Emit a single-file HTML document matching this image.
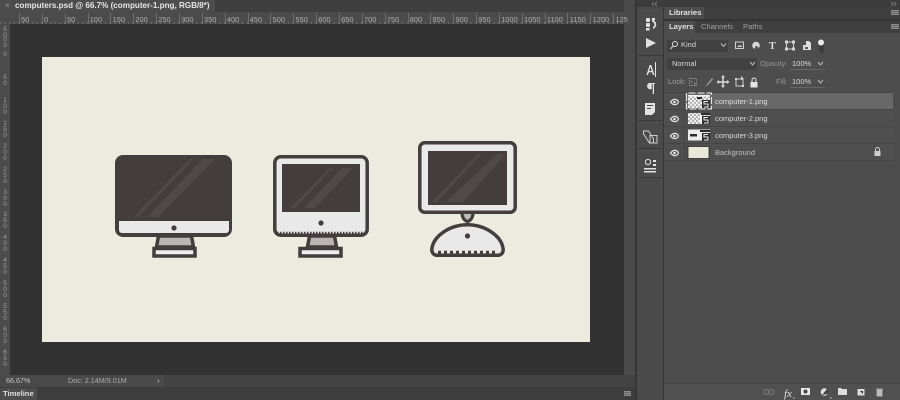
<!DOCTYPE html>
<html><head><meta charset="utf-8"><style>
html,body{margin:0;padding:0;background:#404040}
#r{position:relative;width:900px;height:400px;overflow:hidden;background:#404040;font-family:"Liberation Sans",sans-serif;color:#d2d2d2;font-size:7.5px;filter:blur(.35px)}
#r div{position:absolute}
.t{white-space:nowrap;line-height:12px}
svg{position:absolute;left:0;top:0}
.row{left:664px;width:229px;height:16px;background:#4f4f4f}
.v{font-size:6.5px;line-height:6px;color:#a0a0a0;width:10px;left:0;text-align:center}
</style></head><body><div id="r">
<div style="left:0;top:0;width:636px;height:12px;background:#3e3e3e"></div>
<div style="left:0;top:0;width:215px;height:12px;background:#4d4d4d"></div>
<div class="t" style="left:5px;top:0;color:#9a9a9a;font-size:8px">×</div>
<div class="t" style="left:15px;top:0;color:#e6e6e6;font-weight:bold;font-size:8.1px">computers.psd @ 66.7% (computer-1.png, RGB/8*)</div>
<div style="left:0;top:12px;width:624px;height:12px;background:#4b4b4b"></div>
<div style="left:0;top:22px;width:624px;height:2px;background:repeating-linear-gradient(90deg,#6e6e6e 0 1px,transparent 1px 4.57px)"></div>
<div style="left:0;top:24px;width:10px;height:351px;background:#4b4b4b"></div>
<div style="left:10px;top:24px;width:614px;height:351px;background:#323232"></div>
<div style="left:624px;top:0;width:11px;height:375px;background:#4a4a4a"></div>
<div style="left:42px;top:57px;width:548px;height:285px;background:#ebebdf"></div>
<div style="left:0;top:375px;width:164px;height:12px;background:#4a4a4a"></div>
<div style="left:164px;top:375px;width:471px;height:12px;background:#434343"></div>
<div class="t" style="left:6px;top:375px;color:#c4c4c4;font-size:7.2px">66.67%</div>
<div class="t" style="left:68px;top:375px;color:#aaa;font-size:7.2px">Doc: 2.14M/9.01M</div>
<div class="t" style="left:157px;top:375px;color:#c8c8c8;font-size:8px">›</div>
<div style="left:0;top:387px;width:635px;height:13px;background:#3d3d3d"></div>
<div style="left:0;top:388px;width:37px;height:12px;background:#4d4d4d"></div>
<div class="t" style="left:3px;top:388px;color:#e0e0e0;font-weight:bold;font-size:7.6px">Timeline</div>
<div style="left:635px;top:0;width:2px;height:400px;background:#363636"></div>
<div style="left:637px;top:0;width:26px;height:400px;background:#4a4a4a"></div>
<div style="left:663px;top:0;width:1px;height:400px;background:#363636"></div>
<div style="left:637px;top:0;width:263px;height:7px;background:#3c3c3c"></div>
<div style="left:664px;top:7px;width:236px;height:393px;background:#4d4d4d"></div>
<div style="left:664px;top:7px;width:236px;height:12px;background:#3f3f3f"></div>
<div style="left:664px;top:7px;width:40px;height:12px;background:#4d4d4d"></div>
<div class="t" style="left:669px;top:7px;color:#e0e0e0;font-weight:bold;font-size:7.7px">Libraries</div>
<div style="left:664px;top:19px;width:236px;height:2px;background:#333"></div>
<div style="left:664px;top:21px;width:236px;height:12px;background:#3f3f3f"></div>
<div style="left:664px;top:21px;width:31px;height:12px;background:#4d4d4d"></div>
<div class="t" style="left:669px;top:21px;color:#e0e0e0;font-weight:bold;font-size:7.6px">Layers</div>
<div class="t" style="left:701px;top:21px;color:#a0a0a0;font-size:7.6px">Channels</div>
<div class="t" style="left:743px;top:21px;color:#a0a0a0;font-size:7.6px">Paths</div>
<div style="left:667px;top:40px;width:61px;height:12px;background:#414141"></div>
<div class="t" style="left:681px;top:39px;color:#d8d8d8">Kind</div>
<div style="left:667px;top:58px;width:90px;height:12px;background:#414141"></div>
<div class="t" style="left:672px;top:58px;color:#d8d8d8">Normal</div>
<div class="t" style="left:760px;top:58px;color:#949494">Opacity:</div>
<div class="t" style="left:792px;top:58px;color:#d8d8d8">100%</div>
<div style="left:790px;top:69px;width:35px;height:1px;background:#666"></div>
<div class="t" style="left:668px;top:76px;color:#a0a0a0">Lock:</div>
<div class="t" style="left:776px;top:76px;color:#949494">Fill:</div>
<div class="t" style="left:792px;top:76px;color:#d8d8d8">100%</div>
<div style="left:790px;top:87px;width:35px;height:1px;background:#666"></div>
<div class="row" style="top:93px"></div>
<div class="row" style="top:93px;left:685px;width:208px;background:#686868"></div>
<div class="row" style="top:110px"></div>
<div class="row" style="top:127px"></div>
<div class="row" style="top:144px"></div>
<div style="left:664px;top:92px;width:229px;height:1px;background:#454545"></div>
<div style="left:664px;top:109px;width:229px;height:1px;background:#454545"></div>
<div style="left:664px;top:126px;width:229px;height:1px;background:#454545"></div>
<div style="left:664px;top:143px;width:229px;height:1px;background:#454545"></div>
<div style="left:664px;top:160px;width:229px;height:1px;background:#454545"></div>
<div style="left:684px;top:93px;width:1px;height:67px;background:#474747"></div>
<div class="t" style="left:715px;top:96px;color:#dedede">computer-1.png</div>
<div class="t" style="left:715px;top:113px;color:#d8d8d8">computer-2.png</div>
<div class="t" style="left:715px;top:130px;color:#d8d8d8">computer-3.png</div>
<div class="t" style="left:715px;top:147px;color:#c0c0c0">Background</div>
<div style="left:664px;top:383px;width:236px;height:17px;background:#505050"></div>
<div style="left:664px;top:383px;width:236px;height:1px;background:#474747"></div>
<div class="t" style="left:784px;top:388px;color:#e2e2e2;font-family:'Liberation Serif',serif;font-style:italic;font-size:11px">fx</div>
<div class="v" style="top:27px">5<br>0</div><div class="v" style="top:37px">0<br>0</div>
<div class="v" style="top:52px">0</div><div class="v" style="top:75px">5<br>0</div><div class="v" style="top:98px">1<br>0<br>0</div>
<div class="v" style="top:121px">1<br>5<br>0</div><div class="v" style="top:144px">2<br>0<br>0</div><div class="v" style="top:167px">2<br>5<br>0</div>
<div class="v" style="top:190px">3<br>0<br>0</div><div class="v" style="top:212px">3<br>5<br>0</div><div class="v" style="top:235px">4<br>0<br>0</div>
<div class="v" style="top:258px">4<br>5<br>0</div><div class="v" style="top:281px">5<br>0<br>0</div><div class="v" style="top:304px">5<br>5<br>0</div>
<div class="v" style="top:327px">6<br>0<br>0</div><div class="v" style="top:350px">6<br>5<br>0</div>

<svg width="900" height="400" viewBox="0 0 900 400">
<defs><pattern id="c" width="4" height="4" patternUnits="userSpaceOnUse"><rect width="4" height="4" fill="#eeeeee"/><rect width="2" height="2" fill="#b4b4b4"/><rect x="2" y="2" width="2" height="2" fill="#b4b4b4"/></pattern></defs>
<g font-family="Liberation Sans,sans-serif" font-size="7.4" fill="#adadad">
<text x="21" y="22">50</text><text x="44" y="22">0</text><text x="67" y="22">50</text><text x="89.7" y="22">100</text><text x="112.6" y="22">150</text><text x="135.4" y="22">200</text><text x="158.3" y="22">250</text><text x="181.2" y="22">300</text><text x="204" y="22">350</text><text x="226.9" y="22">400</text><text x="249.7" y="22">450</text><text x="272.6" y="22">500</text><text x="295.5" y="22">550</text><text x="318.3" y="22">600</text><text x="341.2" y="22">650</text><text x="364" y="22">700</text><text x="386.9" y="22">750</text><text x="409.8" y="22">800</text><text x="432.6" y="22">850</text><text x="455.5" y="22">900</text><text x="478.3" y="22">950</text><text x="501.2" y="22">1000</text><text x="524" y="22">1050</text><text x="546.9" y="22">1100</text><text x="569.8" y="22">1150</text><text x="592.6" y="22">1200</text>
<text x="615.5" y="22">125</text>
</g>
<path stroke="#6e6e6e" stroke-width="1" d="M19.5 13v11M42.5 13v11M65.5 13v11M88.5 13v11M110.5 13v11M133.5 13v11M156.5 13v11M179.5 13v11M202.500 13v11M225.500 13v11M248.500 13v11M270.500 13v11M293.500 13v11M316.500 13v11M339.500 13v11M362.500 13v11M385.500 13v11M408.500 13v11M430.500 13v11M453.500 13v11M476.500 13v11M499.500 13v11M522.500 13v11M545.500 13v11M567.500 13v11M590.500 13v11M613.500 13v11"/>
<!-- computer 1 -->
<path d="M158.500 236h33l2 11h-37z" fill="#bbb6b6" stroke="#433e3b" stroke-width="3.500"/>
<path d="M154 248.500h41v7.500h-41z" fill="#eeeeee" stroke="#433e3b" stroke-width="3.500"/>
<rect x="115" y="155" width="117" height="82" rx="8" fill="#433e3b"/>
<path d="M119 221h110v9a3 3 0 0 1-3 3h-104a3 3 0 0 1-3-3z" fill="#e9e9e9"/>
<circle cx="174" cy="228" r="2.600" fill="#433e3b"/>
<path d="M190 159h3.500l-55 58h-5zM203 159h12l-57 58h-11z" fill="#4f4a47"/>
<!-- computer 2 -->
<path d="M309.500 236h25l2 11h-29z" fill="#bbb6b6" stroke="#433e3b" stroke-width="3.500"/>
<path d="M300 248.500h41v7.500h-41z" fill="#eeeeee" stroke="#433e3b" stroke-width="3.500"/>
<rect x="274.800" y="156.800" width="92.400" height="78.400" rx="6" fill="#e9e9e9" stroke="#433e3b" stroke-width="3.500"/>
<rect x="282" y="164" width="78" height="48" fill="#433e3b"/>
<path d="M330 168h3l-38 40h-5zM342 168h11l-38 40h-11z" fill="#4f4a47"/>
<circle cx="321" cy="223" r="2.600" fill="#433e3b"/>
<path d="M277 233h88" stroke="#433e3b" stroke-width="2.500" stroke-dasharray="1.500 1.500"/>
<!-- computer 3 -->
<path d="M462 213c0 5 3 8 5.500 8.500c2.500-.5 5.500-3.500 5.500-8.500" fill="#bdbdbd" stroke="#433e3b" stroke-width="3.200"/>
<rect x="419.800" y="142.800" width="95.400" height="69.400" rx="5" fill="#e9e9e9" stroke="#433e3b" stroke-width="3.500"/>
<rect x="428" y="151" width="79" height="54" fill="#433e3b"/>
<path d="M478 154h3l-44 48h-5zM497 154h9l-43 48h-17z" fill="#4f4a47"/>
<path d="M437 255.200C433.500 255.200 431.800 252.500 431.800 249.500C433 236 450 224.800 467.500 224.800C485 224.800 502 236 503.200 249.500C503.200 252.500 501.500 255.200 498 255.200Z" fill="#e9e9e9" stroke="#433e3b" stroke-width="3.500" stroke-linejoin="round"/>
<circle cx="467.500" cy="236" r="2.600" fill="#433e3b"/>
<path d="M438 252.500h60" stroke="#433e3b" stroke-width="3.500" stroke-dasharray="3 3"/>
<!-- dock -->
<path d="M637.500 55.500h25M637.500 120.500h25M637.500 148.500h25M637.500 177.500h25" stroke="#3a3a3a"/>
<path d="M640 10h20M640 58h20M640 123h20M640 151h20" stroke="#585858" stroke-dasharray="1 1"/>
<g fill="#e2e2e2">
<rect x="646" y="18" width="4" height="4" rx="1"/><rect x="646" y="23" width="4" height="4" rx="1"/><rect x="646" y="28" width="3.500" height="2.500"/>
<path d="M652 18h3v2h-1l2 3c.8 2-.4 5-3 6v-2c1.500-.8 1.800-2.400 1.200-3.500l-2.200-2.500z"/>
<path d="M646 38l10 5-10 5z"/>
<path d="M655 62h1v15h-1z"/><path d="M648 75h-1.600l3.300-10h1.600l3.200 10h-1.600l-.8-2.800h-3.200zM649.200 71h2.500l-1.200-4.200z"/>
<path d="M649 83h6v1h-1v10h-1.300v-10h-1v5a3 3 0 0 1 -2.700-6z"/>
<path d="M645 103h10v9l-3 3h-7zM647 105v1h6v-1zM647 108v1h4v-1z" fill-rule="evenodd"/>
<path d="M643.500 131h5l5 8v4h-4l-6-9zM650 135.500h7v7.500h-7z" fill="none" stroke="#cfcfcf"/>
<circle cx="648" cy="162" r="2.600" fill="none" stroke="#e2e2e2"/><rect x="653" y="160" width="3" height="2"/><rect x="653" y="164" width="3" height="2"/><rect x="644" y="168" width="12" height="1.500"/><rect x="644" y="171" width="12" height="1.500"/>
</g>
<path d="M654 2l-2 2 2 2M657 2l-2 2 2 2M894 2l2 2-2 2M891 2l2 2-2 2" fill="none" stroke="#8a8a8a" stroke-width=".8"/>
<path d="M891 10h8v5h-8zM891 24h8v5h-8zM624 391h7v5h-7z" fill="#8e8e8e"/>
<path d="M891 11.500h8M891 13.500h8M891 25.500h8M891 27.500h8M624 392.500h7M624 394.500h7" stroke="#5b5b5b" stroke-width=".7"/>
<!-- filter row -->
<circle cx="675" cy="44" r="2.500" fill="none" stroke="#dcdcdc"/><path d="M673 46l-2.500 3" stroke="#dcdcdc"/>
<path d="M721 43.500l2.500 3 2.500-3M750 62l2.500 3 2.500-3M818 62l2.500 3 2.500-3M818 80l2.500 3 2.500-3" fill="none" stroke="#bdbdbd"/>
<rect x="735.500" y="42" width="8" height="6.500" fill="none" stroke="#d0d0d0"/><path d="M737 47l2-2 1 1 1-1 1.500 2z" fill="#d0d0d0"/>
<circle cx="756" cy="45.500" r="3.800" fill="#d8d8d8"/><path d="M756 45.500l3 2.500a3.800 3.800 0 0 1-5 1.400z" fill="#555"/>
<text x="769" y="49" font-family="Liberation Serif,serif" font-weight="bold" font-size="10" fill="#e0e0e0">T</text>
<rect x="786.500" y="42" width="7" height="7" fill="none" stroke="#d0d0d0"/><path d="M785 40.500h3v3h-3zM792 40.500h3v3h-3zM785 47.500h3v3h-3zM792 47.500h3v3h-3z" fill="#d8d8d8"/>
<path d="M803 45h3v-4h3l2 2v7h-8z" fill="#dedede"/><path d="M805 47h3v2h-3z" fill="#555"/>
<rect x="819" y="44" width="5" height="9" rx="2.500" fill="#3c3c3c"/><circle cx="821" cy="42.500" r="3" fill="#ececec"/>
<!-- lock row -->
<rect x="689.500" y="78.500" width="7" height="7" fill="none" stroke="#8e8e8e" stroke-dasharray="1.500 1"/><path d="M691 81h1.500v1.500H691zM694 83h1.500v1.500H694z" fill="#8e8e8e"/>
<path d="M705 87l3-4 4-5 1 1-4 5z" fill="#9e9e9e"/>
<path d="M723 76.500v10M718 82h10" stroke="#dadada" stroke-width="1.500"/><path d="M723 75l-2 2.500h4zM723 88l-2-2.500h4zM716.500 82l2.500-2v4zM729.500 82l-2.500-2v4z" fill="#dadada"/>
<rect x="736" y="79" width="7" height="7" fill="none" stroke="#d0d0d0"/><path d="M735 78h2v2h-2zM742 85h2v2h-2zM741 76l3 3-3 1z" fill="#d8d8d8"/>
<rect x="750.500" y="82" width="7" height="5.500" fill="#e6e6e6"/><path d="M752 82v-2a2 2 0 0 1 4 0v2" fill="none" stroke="#e6e6e6"/>
<!-- eyes -->
<g fill="none" stroke="#e6e6e6" stroke-width="1.200"><path d="M670.500 102c2.500-3.500 6.500-3.500 8 0c-1.500 3.500-5.500 3.500-8 0zM670.500 119c2.500-3.500 6.500-3.500 8 0c-1.500 3.500-5.500 3.500-8 0zM670.500 136c2.500-3.500 6.500-3.500 8 0c-1.500 3.500-5.500 3.500-8 0zM670.500 153c2.500-3.500 6.500-3.500 8 0c-1.500 3.500-5.500 3.500-8 0z"/></g>
<g fill="#e6e6e6"><circle cx="674.500" cy="102" r="1.300"/><circle cx="674.500" cy="119" r="1.300"/><circle cx="674.500" cy="136" r="1.300"/><circle cx="674.500" cy="153" r="1.300"/></g>
<!-- thumbs -->
<rect x="688" y="96" width="22" height="12" fill="url(#c)"/><rect x="688" y="95" width="22" height="1.500" fill="#f4f4f4"/><path d="M697 97h5v2h-5z" fill="#2c2c2c"/>
<path d="M686.500 94v15h25v-16h-25z" fill="none" stroke="#f0f0f0" stroke-width=".9" stroke-dasharray="7 2"/>
<rect x="702" y="100" width="8" height="8" fill="#2e2e2e"/><path d="M708 101.500h-4v2.500h4v3h-4" fill="none" stroke="#eee"/>
<rect x="688" y="113" width="22" height="11" fill="url(#c)"/><path d="M701 113h9v2h-9z" fill="#2c2c2c"/><path d="M700 115h2v9h-2z" fill="#f4f4f4"/>
<rect x="702" y="116" width="8" height="8" fill="#2e2e2e"/><path d="M708 117.500h-4v2.500h4v3h-4" fill="none" stroke="#eee"/>
<rect x="688" y="129.500" width="22" height="11" fill="#ececec"/><path d="M690 134h7v2.500h-7zM700 130h10v2h-10z" fill="#2c2c2c"/>
<rect x="702" y="133" width="8" height="8" fill="#2e2e2e"/><path d="M708 134.500h-4v2.500h4v3h-4" fill="none" stroke="#eee"/>
<rect x="688" y="146.500" width="21" height="12" fill="#e9e9da" stroke="#2b2b2b" stroke-width=".8"/>
<path d="M875.500 151v-1.500a2 2 0 0 1 4 0v1.500" fill="none" stroke="#cfcfcf"/><rect x="874.500" y="151" width="6" height="5" fill="#cfcfcf"/>
<!-- footer -->
<g fill="none" stroke="#757575" stroke-width="1.200"><circle cx="766.500" cy="392" r="2.500"/><circle cx="771.500" cy="392" r="2.500"/></g>
<rect x="801" y="388" width="9" height="7" fill="#e8e8e8"/><circle cx="805.500" cy="391.500" r="2" fill="#444"/>
<circle cx="824.500" cy="392" r="3.800" fill="#e0e0e0"/><path d="M822 395l5-6a3.800 3.800 0 0 1 1 5z" fill="#444"/>
<path d="M838 388h3l1 1h5v6h-9z" fill="#dcdcdc"/>
<rect x="857.500" y="389" width="7" height="6.500" fill="#dcdcdc"/><path d="M860 391h3v3z" fill="#333"/>
<path d="M876 389h7M877 390h5v6h-5z" fill="#b9b9b9" stroke="#c8c8c8" stroke-width=".7"/>
<path d="M793 398h1.500M830 398h1.500" stroke="#ddd" stroke-width="1"/>
</svg>
</div></body></html>
